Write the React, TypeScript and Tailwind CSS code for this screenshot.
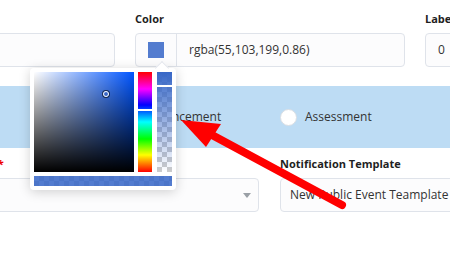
const checker =
  "bg-[conic-gradient(#cccccc_25%,#ffffff_0_50%,#cccccc_0_75%,#ffffff_0)] bg-[length:10px_10px]";

function ColorPicker() {
  return (
    <div className="absolute left-[-105px] top-[58px] z-10 w-[146px] rounded bg-white p-1 shadow-[0_2px_12px_rgba(0,0,0,0.18)]">
      {/* notch */}
      <div className="absolute left-[127px] top-[-5px] h-[10px] w-[10px] rotate-45 border-l border-t border-[#e4e7ed] bg-white" />
      <div className="relative flex">
        {/* saturation / value */}
        <div className="relative h-[100px] w-[100px] bg-[#0055ff]">
          <div className="absolute inset-0 bg-[linear-gradient(to_right,#ffffff,rgba(255,255,255,0))]" />
          <div className="absolute inset-0 bg-[linear-gradient(to_bottom,rgba(0,0,0,0),#000000)]" />
          <div className="absolute left-[69px] top-[19px] h-[6px] w-[6px] rounded-full border border-white shadow-[0_0_0_1px_rgba(0,0,0,0.6)]" />
        </div>
        {/* hue */}
        <div className="relative ml-1 h-[100px] w-[14px] bg-[linear-gradient(to_bottom,#ff0000_0%,#ff00ff_17%,#0000ff_33%,#00ffff_50%,#00ff00_67%,#ffff00_83%,#ff0000_100%)]">
          <div className="absolute left-0 right-0 top-[37px] h-[2px] bg-white" />
        </div>
        {/* alpha */}
        <div className={`relative ml-[5px] h-[100px] w-[15px] ${checker}`}>
          <div className="absolute inset-0 bg-[linear-gradient(to_bottom,rgb(55,103,199),rgba(55,103,199,0))]" />
          <div className="absolute left-0 right-0 top-[13px] h-[2px] bg-white" />
        </div>
      </div>
      <div className={`relative mt-1 h-[10px] ${checker}`}>
        <div className="absolute inset-0 bg-[rgba(55,103,199,0.86)]" />
      </div>
    </div>
  );
}

function Radio({ label }: { label: string }) {
  return (
    <div className="flex items-center gap-2">
      <span className="h-[17px] w-[17px] shrink-0 rounded-full border border-[#d9dee4] bg-white" />
      <span className="text-[12px] text-[#333]">{label}</span>
    </div>
  );
}

const labelCls = "h-[18px] whitespace-nowrap text-[11px] font-bold leading-[18px] text-[#1f1f1f]";
const inputCls = "mt-[5px] h-[34px] rounded border border-[#dfe3ea] bg-[#fcfcfd]";

export default function App() {
  return (
    <div className="relative h-[254px] w-[450px] overflow-hidden bg-white font-['Open_Sans',sans-serif] text-[#333]">
      {/* Top row */}
      <div className="ml-[-155px] flex gap-5 pt-[10px]">
        <div className="w-[270px] shrink-0">
          <div className={labelCls}>Event Name</div>
          <div className={inputCls} />
        </div>
        <div className="relative w-[270px] shrink-0">
          <div className={labelCls}>Color</div>
          <div className={`${inputCls} flex`}>
            <div className="flex w-[41px] items-center justify-center border-r border-[#dfe3ea]">
              <div className="h-4 w-4 bg-[rgba(55,103,199,0.86)]" />
            </div>
            <div className="flex items-center pl-3 text-[12px]">rgba(55,103,199,0.86)</div>
          </div>
          <ColorPicker />
        </div>
        <div className="w-[200px] shrink-0">
          <div className={labelCls}>Label Order</div>
          <div className={`${inputCls} flex items-center pl-3 text-[12px]`}>0</div>
        </div>
      </div>

      {/* Type band */}
      <div className="mt-[19px] h-[62px] bg-[#bddcf4]">
        <div className="ml-[110px] grid h-full grid-cols-[170px_180px] items-center">
          <Radio label="Announcement" />
          <Radio label="Assessment" />
        </div>
      </div>

      {/* Bottom row */}
      <div className="ml-[-65px] flex gap-[21px] pt-[7px]">
        <div className="w-[324px] shrink-0">
          <div className={labelCls}>
            Event Type <span className="text-[#ee0000]">*</span>
          </div>
          <div className={`${inputCls} flex items-center justify-end pr-[7px] bg-[#fcfbfc]`}>
            <span className="h-0 w-0 border-x-[4px] border-t-[5px] border-x-transparent border-t-[#9aa0a6]" />
          </div>
        </div>
        <div className="w-[270px] shrink-0">
          <div className={labelCls}>Notification Template</div>
          <div className={`${inputCls} flex items-center whitespace-nowrap pl-[9px] text-[12px]`}>
            New Public Event Teamplate
          </div>
        </div>
      </div>

      {/* Annotation arrow */}
      <svg className="pointer-events-none absolute inset-0 z-20" width="450" height="254" viewBox="0 0 450 254">
        <line x1="212" y1="135" x2="342" y2="205" stroke="#ff0000" strokeWidth="8" strokeLinecap="round" />
        <polygon points="181,120 221,124 206,147" fill="#ff0000" />
      </svg>
    </div>
  );
}
